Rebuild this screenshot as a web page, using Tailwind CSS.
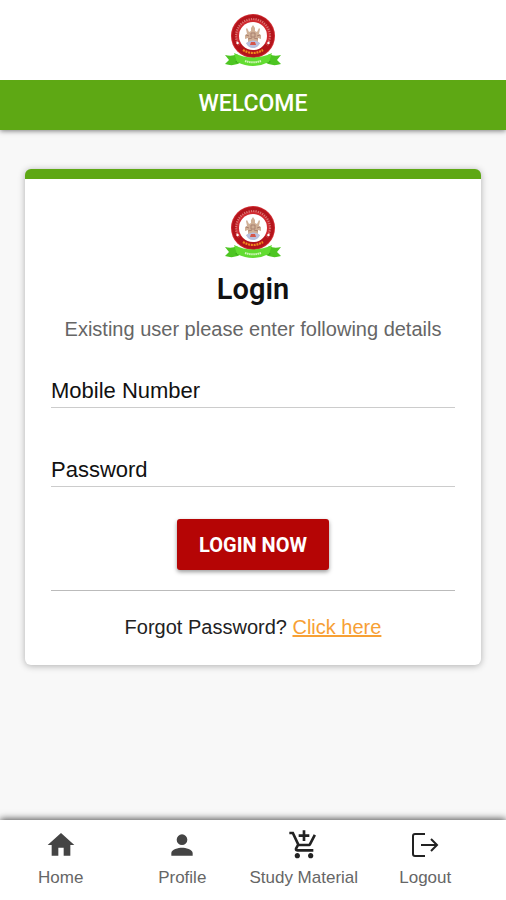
<!DOCTYPE html>
<html lang="en">
<head>
    <meta charset="UTF-8">
    <meta name="viewport" content="width=device-width, initial-scale=1.0">
    <title>Login</title>
    <script src="https://cdn.jsdelivr.net/npm/@tailwindcss/browser@4"></script>
</head>
<body class="bg-[#f8f8f8] min-h-screen flex flex-col font-['Liberation_Sans',sans-serif] text-[#111]">
    <svg class="hidden" aria-hidden="true">
        <symbol id="logo" viewBox="0 0 58 54">
            <g transform="translate(0 -3)">
                <circle cx="29" cy="26" r="22" fill="#cf2a30"/>
                <circle cx="29" cy="26" r="19" fill="none" stroke="#b3141b" stroke-width="4"/>
                <circle cx="29" cy="26" r="17" fill="none" stroke="#e9a9a4" stroke-width="2.2" stroke-dasharray="1.2 1.1" pathLength="104" opacity=".6"/>
                <path d="M15 35a17 17 0 0 0 28 0" fill="none" stroke="#b3141b" stroke-width="5"/>
                <path d="M19 40q10 6 20 0" fill="none" stroke="#f08a1c" stroke-width="2.2" stroke-dasharray="2 .8"/>
                <circle cx="13.5" cy="33" r="1.2" fill="#fff"/>
                <circle cx="44.5" cy="33" r="1.2" fill="#fff"/>
                <circle cx="29" cy="26" r="14" fill="#fff"/>
                <path d="M29 15l2 3v3l2 1 2-4 1 1-1 5 2 1v4l-3-1v4l2 2H22l2-2v-4l-3 1v-4l2-1-1-5 1-1 2 4 2-1v-3z" fill="#d0b096"/>
                <path d="M27 23h4v4h-4zM24 29l4-1M30 28l4 1M22 25l3 1M33 26l3-1" stroke="#a88070" fill="none"/>
                <path d="M22 33q7-5 14 0-2 5-7 5t-7-5" fill="#b9c0de"/>
                <path d="M27 32h4l1 3h-6z" fill="#d5564a"/>
            </g>
            <path d="M1 42q7 2 12-1l5 8q-8 5-17 2l4-4z" fill="#4dc522"/>
            <path d="M57 42q-7 2-12-1l-5 8q8 5 17 2l-4-4z" fill="#4dc522"/>
            <path d="M11 49l5-2 1 3zM47 49l-5-2-1 3z" fill="#278b12"/>
            <path d="M10 40q19 9 38 0l-3 9q-16 8-32 0z" fill="#62dc31"/>
            <path d="M21 48q8 2.500 16 0" fill="none" stroke="#d4f6bd" stroke-width="2" stroke-dasharray="1.500 .6"/>
        </symbol>
    </svg>

    <header class="relative shadow-[0_1px_5px_rgba(0,0,0,0.5)]">
        <div class="bg-white h-20 flex items-center justify-center">
            <svg class="w-[58px] h-[54px]" role="img" aria-label="Logo"><use href="#logo"/></svg>
        </div>
        <h1 class="bg-[#5ea814] h-[50px] pb-0.5 flex items-center justify-center font-[Roboto,sans-serif] font-medium text-[23px] text-white">WELCOME</h1>
    </header>

    <main class="grow px-[25px] pt-[39px]">
        <form class="bg-white rounded-md border-t-10 border-[#5ea814] px-[26px] pt-[26px] pb-6 flex flex-col text-center shadow-[0_1px_7px_rgba(0,0,0,0.3)]">
            <svg class="w-[58px] h-[54px] mx-auto" role="img" aria-label="Logo"><use href="#logo"/></svg>
            <h2 class="mt-3 font-[Roboto,sans-serif] font-semibold text-[29px] leading-9">Login</h2>
            <p class="mt-2 text-xl leading-7 text-[#666] whitespace-nowrap -mx-4">Existing user please enter following details</p>
            <input type="tel" aria-label="Mobile Number" placeholder="Mobile Number"
                   class="mt-[29px] h-9 pt-0.5 w-full border-b border-[#ccc] text-[22px] placeholder:text-[#111] outline-none">
            <input type="password" aria-label="Password" placeholder="Password"
                   class="mt-[43px] h-9 pt-0.5 w-full border-b border-[#ccc] text-[22px] placeholder:text-[#111] outline-none">
            <button type="button"
                    class="mt-8 h-[51px] px-[22px] mx-auto bg-[#b50505] text-white rounded-[3px] font-[Roboto,sans-serif] font-bold text-xl shadow-[0_2px_4px_rgba(0,0,0,0.4)]">
                LOGIN NOW
            </button>
            <hr class="mt-5 border-[#bbb]">
            <p class="mt-[22px] text-xl leading-7 text-[#222]">
                Forgot Password?
                <a href="#" class="text-[#f7a035] underline">Click here</a>
            </p>
        </form>
    </main>

    <nav class="relative bg-white h-20 pr-5 pt-[9px] grid grid-cols-4 text-[17px] leading-6 text-[#666] whitespace-nowrap shadow-[0_-1px_7px_rgba(0,0,0,0.7)]">
        <a href="#" class="flex flex-col items-center gap-[5px]">
            <svg class="size-8" viewBox="0 0 24 24" fill="#444"><path d="M10 20v-6h4v6h5v-8h3L12 3 2 12h3v8z"/></svg>
            Home
        </a>
        <a href="#" class="flex flex-col items-center gap-[5px]">
            <svg class="size-8" viewBox="0 0 24 24" fill="#444"><path d="M12 12a4 4 0 1 0 0-8 4 4 0 0 0 0 8zm0 2c-2.670 0-8 1.340-8 4v2h16v-2c0-2.660-5.330-4-8-4z"/></svg>
            Profile
        </a>
        <a href="#" class="flex flex-col items-center gap-[5px]">
            <svg class="size-8" viewBox="0 0 24 24" fill="#222"><path d="M11 9h2V6h3V4h-3V1h-2v3H8v2h3v3zm-4 9c-1.100 0-1.990.9-1.990 2S5.900 22 7 22s2-.9 2-2-.9-2-2-2zm10 0c-1.100 0-1.990.9-1.990 2s.89 2 1.990 2 2-.9 2-2-.9-2-2-2zm-8.900-5h7.450c.75 0 1.410-.41 1.750-1.030L21 4.960 19.250 4l-3.700 7H8.530L4.270 2H1v2h2l3.600 7.590-1.350 2.440C4.520 15.370 5.480 17 7 17h12v-2H7l1.100-2z"/></svg>
            Study Material
        </a>
        <a href="#" class="flex flex-col items-center gap-[5px]">
            <svg class="size-8" viewBox="0 0 32 32" fill="none" stroke="#222" stroke-width="2"><path d="M16 5H6a2 2 0 0 0-2 2v18a2 2 0 0 0 2 2h10M12 16h16M22 10l6 6-6 6"/></svg>
            Logout
        </a>
    </nav>
</body>
</html>
